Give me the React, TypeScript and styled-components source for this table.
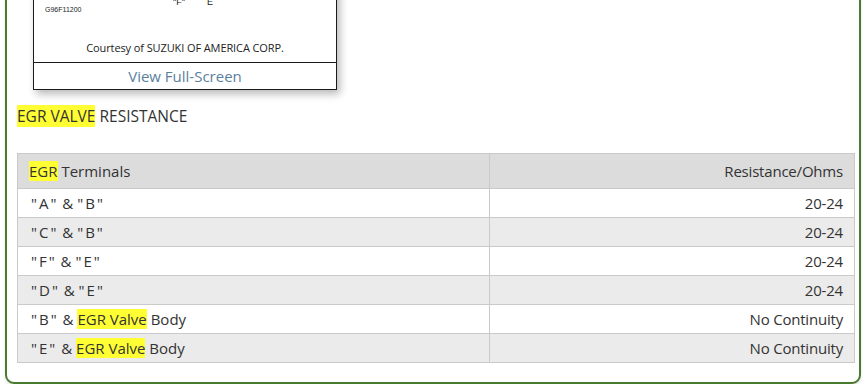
import styled, { createGlobalStyle } from "styled-components";

const GlobalStyle = createGlobalStyle`
  html, body {
    margin: 0;
    padding: 0;
    background: #fff;
    overflow: hidden;
  }
  body {
    font-family: "Open Sans", "Noto Sans", Arial, sans-serif;
    color: #333;
  }
`;

const Page = styled.div`
  padding: 0 2px 0 5px;
`;

const Panel = styled.section`
  margin-top: -181px;
  border: 2px solid #4a7a2e;
  border-radius: 9px;
  padding: 10px 4px 19px 9px;
  background: #fff;
  box-shadow: 0 2px 3px rgba(0, 0, 0, 0.12);
`;

const FigureCard = styled.figure`
  margin: 0 0 0 17px;
  width: 302px;
  border: 1px solid #1a1a1a;
  background: #fff;
  box-shadow: 3px 4px 8px rgba(0, 0, 0, 0.28);
`;

const Diagram = styled.svg`
  display: block;
  width: 302px;
  height: 200px;
`;

const Caption = styled.figcaption`
  height: 30px;
  display: flex;
  align-items: center;
  justify-content: center;
  font-size: 11px;
  color: #222;
  letter-spacing: -0.1px;
`;

const FullScreen = styled.a`
  display: block;
  border-top: 1px solid #1a1a1a;
  height: 26px;
  line-height: 26px;
  text-align: center;
  font-size: 15px;
  color: #5b7f9e;
  text-decoration: none;
`;

const Heading = styled.p`
  margin: 16px 0 26px 1px;
  font-size: 15.5px;
  line-height: 21px;
`;

const Mark = styled.mark`
  background: #ffff33;
  color: inherit;
`;

const Table = styled.table`
  width: 838px;
  margin-left: 1px;
  border-collapse: collapse;
  font-size: 15px;
`;

const HeadCell = styled.th<{ $right?: boolean }>`
  height: 34px;
  padding: 0 11px;
  background: #dcdcdc;
  border: 1px solid #cacaca;
  font-weight: normal;
  text-align: ${(p) => (p.$right ? "right" : "left")};
  width: ${(p) => (p.$right ? "auto" : "449px")};
  letter-spacing: ${(p) => (p.$right ? "-0.2px" : "0")};
`;

const Row = styled.tr<{ $shade: boolean }>`
  background: ${(p) => (p.$shade ? "#ebebeb" : "#fff")};
`;

const Cell = styled.td<{ $right?: boolean }>`
  height: 28px;
  padding: 0 11px 0 13px;
  border: 1px solid #cacaca;
  text-align: ${(p) => (p.$right ? "right" : "left")};
  letter-spacing: ${(p) => (p.$right ? "-0.2px" : "0")};
`;

const Quote = styled.span`
  letter-spacing: 2px;
`;

type Entry = { a: string; b: string; body?: boolean; value: string };

const rows: Entry[] = [
  { a: "A", b: "B", value: "20-24" },
  { a: "C", b: "B", value: "20-24" },
  { a: "F", b: "E", value: "20-24" },
  { a: "D", b: "E", value: "20-24" },
  { a: "B", b: "", body: true, value: "No Continuity" },
  { a: "E", b: "", body: true, value: "No Continuity" },
];

const Terminal = ({ entry }: { entry: Entry }) => (
  <>
    <Quote>"{entry.a}"</Quote> &amp;{" "}
    {entry.body ? (
      <>
        <Mark>EGR Valve</Mark> Body
      </>
    ) : (
      <Quote>"{entry.b}"</Quote>
    )}
  </>
);

export default function App() {
  return (
    <Page>
      <GlobalStyle />
      <Panel>
        <FigureCard>
          <Diagram viewBox="0 0 302 200">
            <g fill="none" stroke="#222" strokeWidth="1">
              <rect x="110" y="60" width="90" height="70" rx="6" />
              <line x1="143" y1="130" x2="143" y2="150" />
              <line x1="176" y1="130" x2="176" y2="150" />
            </g>
            <g fontFamily="Liberation Sans, Arial, sans-serif" fill="#222">
              <text x="139" y="173" fontSize="9">"F"</text>
              <text x="173" y="173" fontSize="9">E</text>
              <text x="11" y="180" fontSize="7">G96F11200</text>
            </g>
          </Diagram>
          <Caption>Courtesy of SUZUKI OF AMERICA CORP.</Caption>
          <FullScreen href="#">View Full-Screen</FullScreen>
        </FigureCard>
        <Heading>
          <Mark>EGR VALVE</Mark> RESISTANCE
        </Heading>
        <Table>
          <thead>
            <tr>
              <HeadCell>
                <Mark>EGR</Mark> Terminals
              </HeadCell>
              <HeadCell $right>Resistance/Ohms</HeadCell>
            </tr>
          </thead>
          <tbody>
            {rows.map((r, i) => (
              <Row key={i} $shade={i % 2 === 1}>
                <Cell>
                  <Terminal entry={r} />
                </Cell>
                <Cell $right>{r.value}</Cell>
              </Row>
            ))}
          </tbody>
        </Table>
      </Panel>
    </Page>
  );
}
